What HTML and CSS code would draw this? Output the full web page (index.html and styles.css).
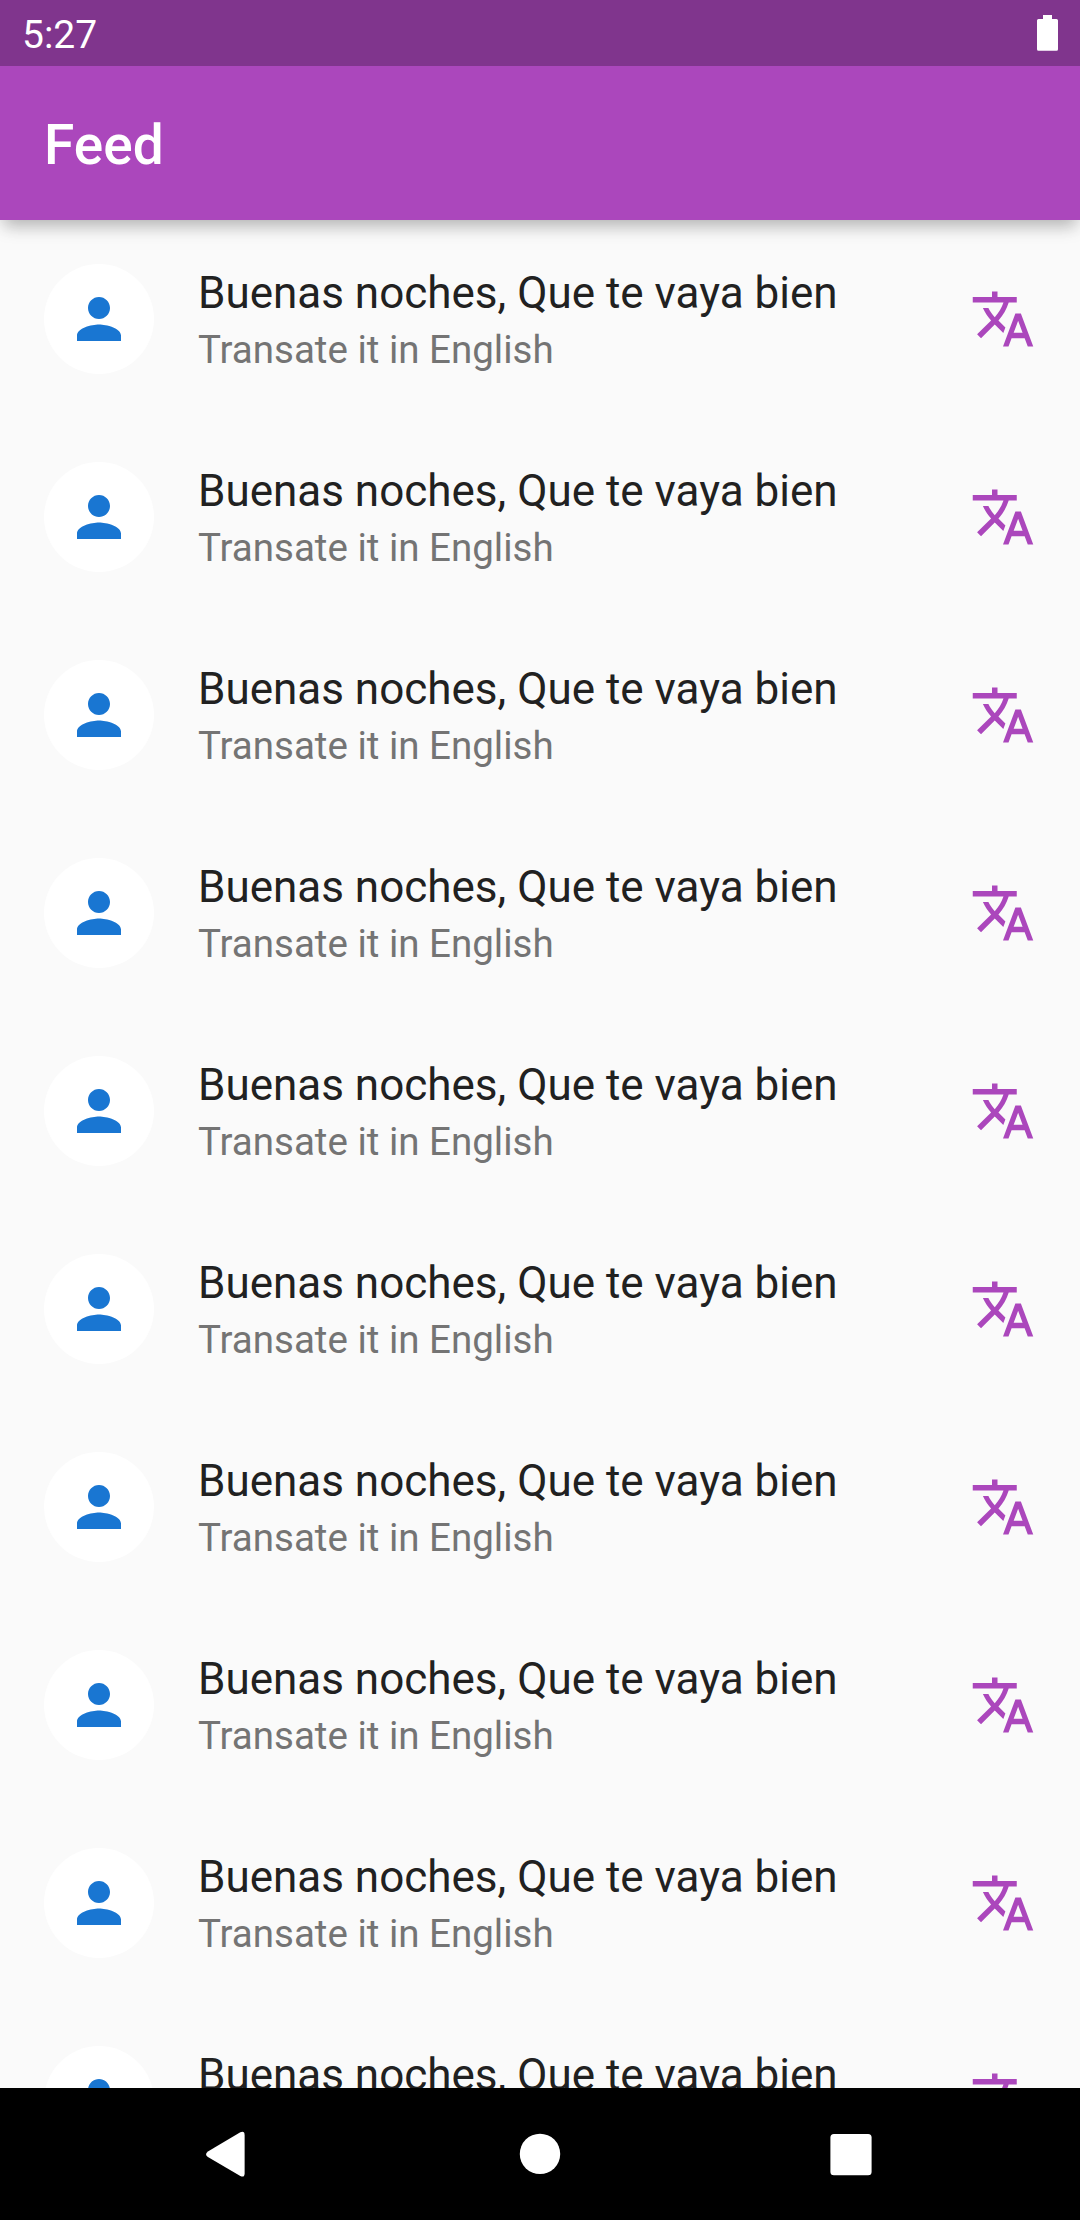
FILE: index.html
```html
<!DOCTYPE html>
<html lang="en">
<head>
<meta charset="utf-8">
<title>Feed</title>
<link rel="stylesheet" href="styles.css">
</head>
<body>
<svg class="sprite" aria-hidden="true">
  <symbol id="person" viewBox="0 0 24 24"><path d="M12 12c2.21 0 4-1.79 4-4s-1.79-4-4-4-4 1.79-4 4 1.79 4 4 4zm0 2c-2.67 0-8 1.34-8 4v2h16v-2c0-2.66-5.33-4-8-4z"/></symbol>
  <symbol id="translate" viewBox="0 0 24 24"><path d="M12.87 15.07l-2.54-2.51.03-.03c1.74-1.94 2.98-4.17 3.71-6.53H17V4h-7V2H8v2H1v1.99h11.17C11.5 7.92 10.44 9.75 9 11.35 8.07 10.32 7.3 9.19 6.69 8h-2c.73 1.63 1.73 3.17 2.98 4.56l-5.09 5.02L4 19l5-5 3.11 3.11.76-2.04zM18.5 10h-2L12 22h2l1.12-3h4.75L21 22h2l-4.5-12zm-2.62 7l1.62-4.33L19.12 17h-3.24z"/></symbol>
</svg>
<div class="screen">
  <header class="top">
    <div class="status">
      <span>5:27</span>
      <svg class="battery" viewBox="0 0 21 36"><path d="M6 0h9v4h4.500a1.500 1.500 0 0 1 1.500 1.500v28.700a1.500 1.500 0 0 1-1.500 1.500h-18a1.500 1.500 0 0 1-1.500-1.500V5.500a1.500 1.500 0 0 1 1.500-1.500H6z"/></svg>
    </div>
    <h1 class="appbar">Feed</h1>
  </header>
  <ul class="feed">
    <li class="row"><span class="avatar"><svg class="icon"><use href="#person"/></svg></span><div class="text"><p class="title">Buenas noches, Que te vaya bien</p><p class="subtitle">Transate it in English</p></div><svg class="icon translate"><use href="#translate"/></svg></li>
    <li class="row"><span class="avatar"><svg class="icon"><use href="#person"/></svg></span><div class="text"><p class="title">Buenas noches, Que te vaya bien</p><p class="subtitle">Transate it in English</p></div><svg class="icon translate"><use href="#translate"/></svg></li>
    <li class="row"><span class="avatar"><svg class="icon"><use href="#person"/></svg></span><div class="text"><p class="title">Buenas noches, Que te vaya bien</p><p class="subtitle">Transate it in English</p></div><svg class="icon translate"><use href="#translate"/></svg></li>
    <li class="row"><span class="avatar"><svg class="icon"><use href="#person"/></svg></span><div class="text"><p class="title">Buenas noches, Que te vaya bien</p><p class="subtitle">Transate it in English</p></div><svg class="icon translate"><use href="#translate"/></svg></li>
    <li class="row"><span class="avatar"><svg class="icon"><use href="#person"/></svg></span><div class="text"><p class="title">Buenas noches, Que te vaya bien</p><p class="subtitle">Transate it in English</p></div><svg class="icon translate"><use href="#translate"/></svg></li>
    <li class="row"><span class="avatar"><svg class="icon"><use href="#person"/></svg></span><div class="text"><p class="title">Buenas noches, Que te vaya bien</p><p class="subtitle">Transate it in English</p></div><svg class="icon translate"><use href="#translate"/></svg></li>
    <li class="row"><span class="avatar"><svg class="icon"><use href="#person"/></svg></span><div class="text"><p class="title">Buenas noches, Que te vaya bien</p><p class="subtitle">Transate it in English</p></div><svg class="icon translate"><use href="#translate"/></svg></li>
    <li class="row"><span class="avatar"><svg class="icon"><use href="#person"/></svg></span><div class="text"><p class="title">Buenas noches, Que te vaya bien</p><p class="subtitle">Transate it in English</p></div><svg class="icon translate"><use href="#translate"/></svg></li>
    <li class="row"><span class="avatar"><svg class="icon"><use href="#person"/></svg></span><div class="text"><p class="title">Buenas noches, Que te vaya bien</p><p class="subtitle">Transate it in English</p></div><svg class="icon translate"><use href="#translate"/></svg></li>
    <li class="row"><span class="avatar"><svg class="icon"><use href="#person"/></svg></span><div class="text"><p class="title">Buenas noches, Que te vaya bien</p></div><svg class="icon translate"><use href="#translate"/></svg></li>
  </ul>
  <nav class="navbar">
    <svg class="nav-icon" viewBox="0 0 66 66"><path d="M11.900 30.400 44.300 11.300Q48.600 9.500 48.600 14V52.500Q48.600 57 44.300 55L11.900 36.100Q8.200 33.200 11.900 30.400z"/></svg>
    <svg class="nav-icon" viewBox="0 0 66 66"><circle cx="33" cy="32.900" r="20.200"/></svg>
    <svg class="nav-icon" viewBox="0 0 66 66"><rect x="12.400" y="13" width="41.200" height="41.200" rx="3.500"/></svg>
  </nav>
</div>
</body>
</html>
```
FILE: styles.css
```css
* {
  box-sizing: border-box;
  margin: 0;
  padding: 0;
}

body {
  font-family: Roboto, "Liberation Sans", sans-serif;
  background: #fafafa;
}

.sprite {
  display: none;
}

.screen {
  width: 1080px;
  height: 2220px;
  display: flex;
  flex-direction: column;
  overflow: hidden;
}

.top {
  flex: none;
  position: relative;
  z-index: 1;
  height: 220px;
  background: #ab47bc;
  color: #fff;
  box-shadow: 0 10px 16px -4px rgba(0, 0, 0, 0.26), 0 4px 20px rgba(0, 0, 0, 0.05);
}

.status {
  height: 66px;
  padding: 0 22px;
  display: flex;
  justify-content: space-between;
  background: #80358d;
  font-size: 39px;
  line-height: 70px;
}

.battery {
  width: 21px;
  height: 36px;
  margin-top: 15px;
  fill: #fff;
}

.appbar {
  height: 154px;
  padding-left: 44px;
  font-size: 55px;
  font-weight: 500;
  line-height: 158px;
}

.feed {
  flex: 1;
  min-height: 0;
  overflow: hidden;
  list-style: none;
}

.row {
  height: 198px;
  padding: 44px 44px 0;
  display: flex;
}

.avatar {
  width: 110px;
  height: 110px;
  margin-right: 44px;
  display: flex;
  align-items: center;
  justify-content: center;
  border-radius: 50%;
  background: #fff;
  fill: #1976d2;
}

.icon {
  width: 66px;
  height: 66px;
  flex: none;
}

.text {
  flex: 1;
  padding-top: 3px;
  white-space: nowrap;
}

.title {
  margin-bottom: 8px;
  color: #212121;
  font-size: 44px;
  font-weight: 400;
  line-height: 52px;
}

.subtitle {
  color: #747474;
  font-size: 38.5px;
  line-height: 45px;
}

.translate {
  margin-top: 22px;
  fill: #ab47bc;
}

.navbar {
  flex: none;
  height: 132px;
  display: grid;
  grid-template-columns: repeat(3, 310.6px);
  place-content: center;
  justify-items: center;
  background: #000;
}

.nav-icon {
  width: 66px;
  height: 66px;
  fill: #fff;
}
```
